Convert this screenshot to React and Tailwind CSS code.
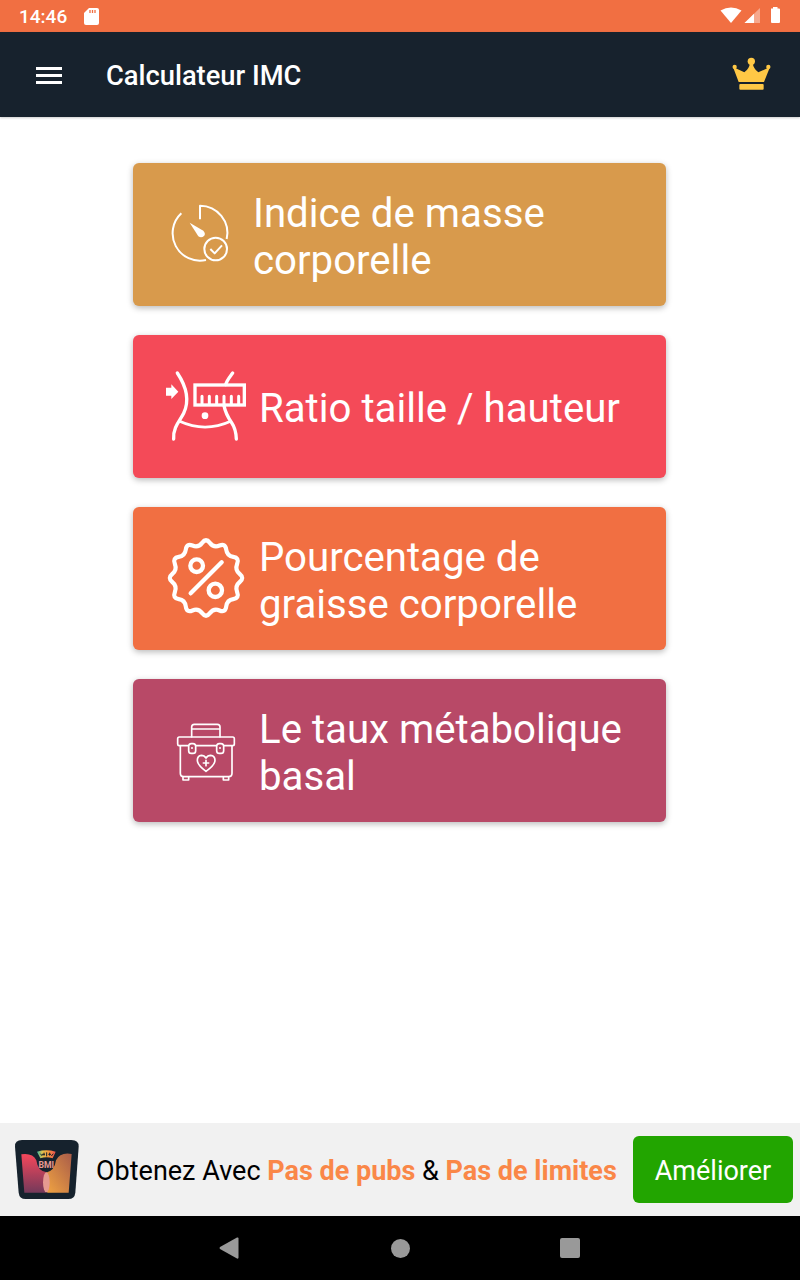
import React from 'react';

// scalloped outline: 12 lobes, smoothed by going through the midpoints
function badgePath(cx, cy, outer, inner, lobes) {
  const pts = [];
  for (let i = 0; i < lobes * 2; i++) {
    const r = i % 2 === 0 ? outer : inner;
    const a = (Math.PI * i) / lobes - Math.PI / 2;
    pts.push([cx + r * Math.cos(a), cy + r * Math.sin(a)]);
  }
  const mid = (p, q) => `${(p[0] + q[0]) / 2} ${(p[1] + q[1]) / 2}`;
  let d = `M${mid(pts[pts.length - 1], pts[0])}`;
  pts.forEach((p, i) => {
    d += ` Q${p[0]} ${p[1]} ${mid(p, pts[(i + 1) % pts.length])}`;
  });
  return d + 'Z';
}

const line = { fill: 'none', stroke: '#fff', strokeLinecap: 'round', strokeLinejoin: 'round' };

function GaugeIcon() {
  return (
    <svg className="h-[81px] w-20 shrink-0" viewBox="33 12 240 243" {...line} strokeWidth="6" strokeLinecap="butt">
      <path d="M135 88V47A82 82 0 0 1 215 147" />
      <path d="M79 70A82 82 0 0 0 153 210" />
      <path d="M104 98L145 122Q153 131 147 138Q139 145 130 139Z" fill="#fff" stroke="none" />
      <circle cx="182" cy="177" r="34" />
      <path d="M166 177L179 190L201 166" />
    </svg>
  );
}

function WaistIcon() {
  return (
    <svg className="h-[81px] w-20 shrink-0" viewBox="33 18 240 243" {...line} strokeWidth="10">
      <path d="M33 83H49V73L70 95L49 117V107H33Z" fill="#fff" stroke="none" />
      <path d="M67 39C91 75 105 120 86 160C76 180 53 203 56 237" />
      <path d="M233 39C225 50 216 60 212 74M207 137C211 158 220 174 230 188Q243 207 244 237" />
      <path d="M74 184Q150 219 227 184" strokeWidth="8.5" />
      <rect x="120" y="75" width="148" height="60" strokeLinejoin="miter" />
      <path d="M141 109V132M163 109V132M185 109V132M207 109V132M229 109V132M251 109V132" strokeWidth="9" />
      <circle cx="150" cy="167" r="10" fill="#fff" stroke="none" />
    </svg>
  );
}

function PercentIcon() {
  return (
    <svg className="h-[81px] w-20 shrink-0" viewBox="33 24 240 243" {...line} strokeWidth="13">
      <g transform="translate(153 144) scale(0.96 1)">
        <path d={badgePath(0, 0, 121, 93, 12)} />
      </g>
      <circle cx="125" cy="107" r="19" />
      <circle cx="181" cy="181" r="20" />
      <path d="M200 97L107 190" />
    </svg>
  );
}

function KitIcon() {
  return (
    <svg className="h-[81px] w-20 shrink-0" viewBox="33 0 240 243" {...line} strokeWidth="5">
      <path d="M110 80V51Q110 43 118 43H187Q195 43 195 51V80M110 57H195" />
      <path d="M98 107H72Q68 107 68 102V86Q68 81 73 81H233Q238 81 238 86V102Q238 107 233 107H208M124 107H182" />
      <rect x="101" y="101" width="21" height="29" rx="8" />
      <rect x="185" y="101" width="21" height="29" rx="8" />
      <circle cx="111" cy="114" r="3" fill="#fff" stroke="none" />
      <circle cx="195" cy="114" r="3" fill="#fff" stroke="none" />
      <path d="M76 108V190Q76 200 86 200H221Q231 200 231 190V108" />
      <path d="M84 202V210H101V202M205 202V210H221V202" />
      <path d="M153 184Q127 165 127 151Q127 137 139 136Q148 136 153 144Q158 136 167 136Q180 137 180 151Q180 165 153 184Z" />
      <path d="M153 151V167M145 159H161" />
    </svg>
  );
}

function CrownIcon() {
  return (
    <svg className="mr-7 mb-[2px] h-9 w-10" viewBox="96 168 120 108" fill="#ffc845">
      <circle cx="154" cy="184" r="11" />
      <circle cx="104" cy="201" r="6.5" />
      <circle cx="205" cy="201" r="6.5" />
      <path d="M99 201L133 217Q148 206 150 188H158Q160 206 175 217L210 201L192 246H116Z" />
      <rect x="118" y="252" width="73" height="17" rx="3" />
    </svg>
  );
}

function AppLogo() {
  return (
    <svg className="mb-[2px] ml-[14px] h-[60px] w-[66px] shrink-0" viewBox="42 57 198 180">
      <defs>
        <linearGradient id="redFill" x1="0" y1="0" x2="0" y2="1">
          <stop offset="0" stopColor="#f5475b" />
          <stop offset="1" stopColor="#74395a" />
        </linearGradient>
        <linearGradient id="goldFill" x1="0" y1="1" x2="1" y2="0">
          <stop offset="0" stopColor="#f3a641" />
          <stop offset="1" stopColor="#a95c49" />
        </linearGradient>
        <linearGradient id="scaleFill">
          <stop offset="0" stopColor="#3db6a0" />
          <stop offset="0.3" stopColor="#e5c34c" />
          <stop offset="0.6" stopColor="#f69a3e" />
          <stop offset="1" stopColor="#ee4d50" />
        </linearGradient>
      </defs>
      <path d="M66 60H214Q237 60 236 80L226 218Q224 237 205 237H77Q58 237 56 218L45 80Q44 60 66 60Z" fill="#16222d" />
      <path d="M64 103Q98 98 109 121Q113 154 140 157V218H73Z" fill="url(#redFill)" />
      <path d="M215 102Q180 96 168 121Q164 153 138 158Q128 184 142 218H206Z" fill="url(#goldFill)" />
      <ellipse cx="139" cy="187" rx="10" ry="30" fill="#e59a91" />
      <path d="M111 95Q139 87 167 95L158 115Q139 109 121 115Z" fill="url(#scaleFill)" />
      <path d="M121 101L127 108M132 98V107M126 103H135M140 97V109M145 103H153M149 98V107M160 101L154 108" stroke="#16222d" strokeWidth="3" />
      <text x="139" y="144" textAnchor="middle" fontFamily="Roboto, sans-serif" fontSize="26" fontWeight="700" fill="#e99a91">BMI</text>
    </svg>
  );
}

const cards = [
  { label: 'Indice de masse corporelle', color: 'bg-[#d89a4c]', Icon: GaugeIcon, gap: 'gap-[7px]' },
  { label: 'Ratio taille / hauteur', color: 'bg-[#f44a58]', Icon: WaistIcon, gap: 'gap-[13px]' },
  { label: 'Pourcentage de graisse corporelle', color: 'bg-[#f16f42]', Icon: PercentIcon, gap: 'gap-[13px]' },
  { label: 'Le taux métabolique basal', color: 'bg-[#b84967]', Icon: KitIcon, gap: 'gap-[13px]' },
];

export default function App() {
  return (
    <div className="flex h-[1280px] w-[800px] flex-col overflow-hidden bg-white font-[Roboto,sans-serif]">
      <div className="flex h-8 items-center bg-[#f16f42] text-white">
        <span className="ml-[19px] w-[65px] pt-px text-[19px] leading-8 font-medium">14:46</span>
        <svg className="h-[17px] w-[15px]" viewBox="0 0 15 17">
          <path d="M5 0H13Q15 0 15 2V15Q15 17 13 17H2Q0 17 0 15V5Z" fill="#fff" />
          <path d="M6 2V5M8.5 2V5M11 2V5" stroke="#f16f42" strokeWidth="1.3" />
        </svg>
        <svg className="mr-5 mb-[3px] ml-auto h-4 w-[60px]" viewBox="0 0 60 16" fill="#fff">
          <path d="M0.5 3.5Q11 -2.5 21.5 3.5L11 16Z" />
          <path d="M24.5 16L40 1V16Z" opacity="0.4" />
          <path d="M24.5 16L34 6.8V16Z" />
          <path d="M51 1.5H53V0H57.5V1.5H59Q60 1.5 60 2.5V15Q60 16 59 16H52Q51 16 51 15V2.5Q51 1.5 51 1.5Z" />
        </svg>
      </div>

      <header className="z-10 flex h-[85px] items-center bg-[#17222d] shadow-[0_1px_2px_rgba(0,0,0,0.2)]">
        <div className="ml-9 flex w-[26px] flex-col gap-1 pt-px">
          <div className="h-[3px] bg-white" />
          <div className="h-[3px] bg-white" />
          <div className="h-[3px] bg-white" />
        </div>
        <h1 className="ml-11 flex-1 pt-0.5 text-[27.3px] leading-10 font-medium whitespace-nowrap text-white">Calculateur IMC</h1>
        <CrownIcon />
      </header>

      <main className="flex flex-1 flex-col gap-[29px] pt-[46px] pl-[133px]">
        {cards.map(({ label, color, Icon, gap }) => (
          <button
            key={label}
            className={`flex h-[143px] w-[533px] items-center rounded-md pl-[33px] text-left text-[40.2px] leading-[47px] text-white shadow-[0_2px_6px_rgba(0,0,0,0.28)] ${color} ${gap}`}
          >
            <Icon />
            <span className="w-[375px] pt-1">{label}</span>
          </button>
        ))}
      </main>

      <div className="flex h-[93px] items-center bg-[#f1f1f1]">
        <AppLogo />
        <p className="ml-4 flex-1 pt-0.5 text-[27px] leading-10 whitespace-nowrap text-black">
          Obtenez Avec <b className="text-[#fa8748]">Pas de pubs</b> & <b className="text-[#fa8748]">Pas de limites</b>
        </p>
        <button className="mr-[7px] h-[67px] w-40 rounded-md bg-[#22a500] pt-0.5 text-[27px] leading-10 text-white">Améliorer</button>
      </div>

      <nav className="flex h-16 items-center bg-black">
        <svg className="ml-[219px] h-[22px] w-5" viewBox="0 0 20 22" fill="#999">
          <path d="M18 0.5Q19.5 0 19.5 1.5V20.5Q19.5 22 18 21.5L1 12Q0 11 1 10Z" />
        </svg>
        <div className="ml-[152px] size-[19px] rounded-full bg-[#999]" />
        <div className="ml-[150px] size-5 rounded-xs bg-[#999]" />
      </nav>
    </div>
  );
}
